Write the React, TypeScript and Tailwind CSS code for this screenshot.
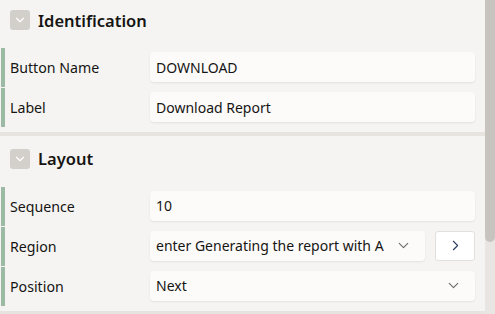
import { ChevronDown, ChevronRight } from "lucide-react";

type Field = {
  label: string;
  value: string;
  kind?: "text" | "select" | "selectButton";
};

const identification: Field[] = [
  { label: "Button Name", value: "DOWNLOAD" },
  { label: "Label", value: "Download Report" },
];

const layout: Field[] = [
  { label: "Sequence", value: "10" },
  { label: "Region", value: "enter Generating the report with A", kind: "selectButton" },
  { label: "Position", value: "Next", kind: "select" },
];

const SectionHeader = ({ title }: { title: string }) => (
  <div className="flex h-[20px] items-center gap-[8px] pl-[10px]">
    <span className="grid h-[20px] w-[20px] place-content-center rounded-[3px] bg-[#d3cfcb]">
      <ChevronDown className="h-[14px] w-[14px] text-white" strokeWidth={2} />
    </span>
    <h2 className="pt-[2px] text-[16.5px] font-semibold leading-none text-[#161513]">{title}</h2>
  </div>
);

const Row = ({ field }: { field: Field }) => (
  <div className="ml-[1px] flex h-[39px] border-l-[4px] border-[#9cb9a3] pt-[4px]">
    <label className="w-[145px] shrink-0 pl-[5px] pt-[7px] text-[14.2px] leading-[18px] text-[#161513]">
      {field.label}
    </label>
    <div className="flex min-w-0 flex-1 gap-[10px] pr-[10px]">
      <div className="flex h-[30px] min-w-0 flex-1 items-center rounded-[4px] bg-[#fcfbfa] pl-[6px] pr-[13px] shadow-[0_1px_2px_rgba(0,0,0,0.08)]">
        <span className="min-w-0 flex-1 overflow-hidden whitespace-nowrap text-[14px] text-[#161513]">
          {field.value}
        </span>
        {field.kind && (
          <ChevronDown className="ml-[4px] h-[17px] w-[17px] shrink-0 text-[#6b6763]" strokeWidth={1.5} />
        )}
      </div>
      {field.kind === "selectButton" && (
        <button className="grid h-[30px] w-[40px] shrink-0 place-content-center rounded-[3px] border border-[#e3e0dc] bg-white">
          <ChevronRight className="h-[17px] w-[17px] text-[#2a3b5c]" strokeWidth={1.5} />
        </button>
      )}
    </div>
  </div>
);

const App = () => {
  return (
    <div
      className="flex h-[314px] w-[495px] overflow-hidden bg-[#f5f4f2]"
      style={{ fontFamily: '"Noto Sans", "Open Sans", sans-serif' }}
    >
      <div className="flex w-[485px] flex-col">
        <section className="pt-[10px]">
          <SectionHeader title="Identification" />
          <div className="mt-[18px] flex flex-col gap-[1px]">
            {identification.map((f) => (
              <Row key={f.label} field={f} />
            ))}
          </div>
        </section>
        <div className="mt-[5px] h-[5px] bg-[#e7e4e0]" />
        <section className="pt-[13px]">
          <SectionHeader title="Layout" />
          <div className="mt-[18px] flex flex-col gap-[1px]">
            {layout.map((f) => (
              <Row key={f.label} field={f} />
            ))}
          </div>
        </section>
        <div className="mt-[5px] h-[5px] bg-[#e7e4e0]" />
      </div>
      <div className="w-[10px] bg-[#e8e5e2]">
        <div className="h-[242px] rounded-b-[5px] bg-[#c7c3bf]" />
      </div>
    </div>
  );
};

export default App;
